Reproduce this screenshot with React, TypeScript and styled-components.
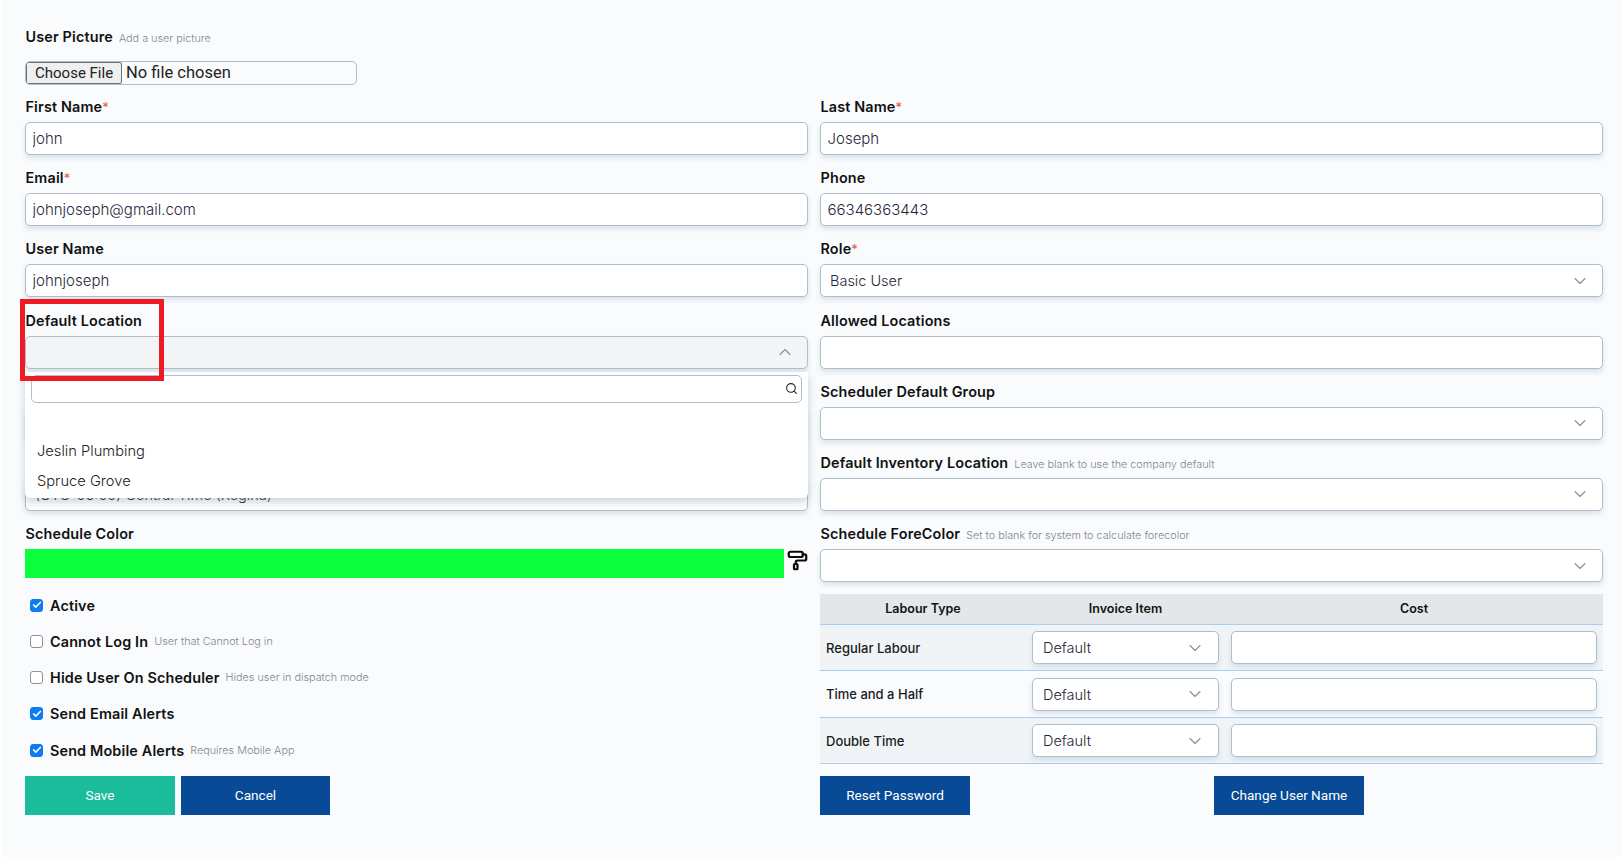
import React from 'react';
import styled, { createGlobalStyle } from 'styled-components';
import { Check, ChevronDown, ChevronUp, PaintRoller, Search } from 'lucide-react';

const GlobalStyle = createGlobalStyle`
  html, body {
    margin: 0;
    background: #ffffff;
  }
  * {
    box-sizing: border-box;
  }
`;

const FONT = `Inter, "Open Sans", "Liberation Sans", sans-serif`;
const BORDER = '#aebecb';

const Page = styled.div`
  position: relative;
  height: 857px;
  margin-left: 1px;
  padding: 26px 19px 0 24px;
  background: #f9fbfd;
  font-family: ${FONT};
  color: #111;
  overflow: hidden;
`;
const Head = styled.div`
  height: 70px;
`;
const Columns = styled.div`
  display: grid;
  grid-template-columns: 783px 783px;
  column-gap: 12px;
`;
const Column = styled.div`
  display: flex;
  flex-direction: column;
`;
const Field = styled.div<{ $height?: number }>`
  position: relative;
  height: ${(p) => p.$height ?? 71.2}px;
`;
const Label = styled.div`
  display: flex;
  align-items: baseline;
  gap: 6px;
  height: 26px;
  padding-left: 0.5px;
  font-size: 14.4px;
  line-height: 21px;
  font-weight: 600;
  letter-spacing: 0.15px;
  white-space: nowrap;
`;
const Required = styled.sup`
  margin-left: -6px;
  font-size: 13px;
  line-height: 0;
  font-weight: 400;
  color: #e2574c;
`;
const Hint = styled.span`
  font-size: 10.8px;
  font-weight: 300;
  letter-spacing: 0;
  color: #7f868e;
`;
const FileInput = styled.input`
  display: block;
  width: 332px;
  height: 24px;
  margin-top: 9px;
  border: 1px solid ${BORDER};
  border-radius: 5px;
  background: #f9fbfd;
  font-family: Roboto, sans-serif;
  font-size: 16.5px;
  line-height: 22px;
  color: #222;
  &::file-selector-button {
    height: 22px;
    margin: 0 4px 0 0;
    padding: 0 8px;
    border: 1px solid #6f6f6f;
    border-radius: 2px;
    background: #efefef;
    font-family: Roboto, sans-serif;
    font-size: 15px;
    color: #222;
  }
`;
const TextInput = styled.input`
  display: block;
  width: 100%;
  height: 33px;
  padding: 0 6.5px;
  border: 1px solid ${BORDER};
  border-radius: 5px;
  background: #fff;
  box-shadow: 0 3px 5px rgba(120, 140, 160, 0.22);
  font-family: ${FONT};
  font-size: 15px;
  font-weight: 300;
  color: #1f2937;
  outline: none;
`;
const SelectBox = styled.div<{ $open?: boolean }>`
  display: flex;
  align-items: center;
  justify-content: space-between;
  height: 33px;
  padding: 0 12px 0 9px;
  border: 1px solid ${BORDER};
  border-radius: 5px;
  background: ${(p) => (p.$open ? '#f2f4f6' : '#fff')};
  box-shadow: 0 3px 5px rgba(120, 140, 160, 0.22);
  font-size: 14.5px;
  font-weight: 300;
  color: #1f2937;
  white-space: nowrap;
  svg {
    flex: none;
    color: #8a93a0;
  }
`;
const Dropdown = styled.div`
  position: absolute;
  top: 62.4px;
  left: 0;
  right: 0;
  z-index: 2;
  height: 126px;
  padding-top: 3px;
  border-radius: 0 0 5px 5px;
  background: #fff;
  box-shadow: 0 4px 9px rgba(90, 110, 130, 0.3);
`;
const SearchBox = styled.div`
  display: flex;
  align-items: center;
  justify-content: flex-end;
  height: 28px;
  margin: 0 6px 3px;
  padding-right: 3px;
  border: 1px solid ${BORDER};
  border-radius: 5px;
  background: #fff;
  color: #222;
`;
const Option = styled.div`
  height: 30px;
  padding: 0 12px;
  font-size: 14.7px;
  line-height: 30px;
  font-weight: 300;
  color: #222;
`;
const ColorRow = styled.div`
  display: flex;
  align-items: flex-start;
  gap: 3px;
`;
const ColorBar = styled.div`
  width: 760px;
  height: 29px;
  background: #0cff3c;
`;
const RollerButton = styled.span`
  display: flex;
  margin-top: 1px;
  color: #0a0a0a;
`;
const CheckRow = styled.label`
  display: flex;
  align-items: center;
  height: 36.25px;
  padding-left: 5px;
  font-size: 14.4px;
  font-weight: 600;
  letter-spacing: 0.15px;
  white-space: nowrap;
`;
const CheckBox = styled.span<{ $checked?: boolean }>`
  display: flex;
  align-items: center;
  justify-content: center;
  width: 13px;
  height: 13px;
  margin-right: 7px;
  border: 1px solid ${(p) => (p.$checked ? '#0d7bf2' : '#8b9298')};
  border-radius: 3px;
  background: ${(p) => (p.$checked ? '#0d7bf2' : '#fff')};
  color: #fff;
`;
const CheckHint = styled(Hint)`
  margin-left: 6px;
`;
const ButtonRow = styled.div<{ $spread?: boolean }>`
  display: flex;
  gap: ${(p) => (p.$spread ? '244px' : '6px')};
  margin-top: ${(p) => (p.$spread ? '12px' : '8px')};
`;
const Button = styled.button<{ $save?: boolean }>`
  width: 150px;
  height: 39px;
  padding: 0 0 1px;
  border: 0;
  background: ${(p) => (p.$save ? '#1abc9c' : '#084a96')};
  font-family: Roboto, sans-serif;
  font-size: 13.6px;
  color: #fff;
`;
const CancelButton = styled(Button)`
  width: 149px;
`;
const Table = styled.table`
  width: 783px;
  border-collapse: collapse;
  table-layout: fixed;
  margin-top: -0.4px;
`;
const HeadCell = styled.th<{ $width?: number }>`
  width: ${(p) => (p.$width ? `${p.$width}px` : 'auto')};
  height: 31px;
  padding: 0 0 2px;
  background: #e4e7ea;
  border-bottom: 1px solid #a9cdf3;
  font-size: 12.5px;
  font-weight: 600;
  text-align: center;
`;
const Row = styled.tr<{ $shaded?: boolean }>`
  background: ${(p) => (p.$shaded ? '#f1f4f6' : 'transparent')};
  border-bottom: 1px solid #a9cdf3;
`;
const Cell = styled.td<{ $tall?: boolean }>`
  height: ${(p) => (p.$tall ? 47 : 46)}px;
  padding: 0 6px;
  font-size: 13px;
  font-weight: 500;
  color: #1c1c1c;
`;
const CellSelect = styled(SelectBox)`
  margin-right: 0.5px;
  padding-left: 10px;
  padding-right: 13px;
`;
const Annotation = styled.div`
  position: absolute;
  top: 299px;
  left: 19px;
  width: 144px;
  height: 82px;
  z-index: 3;
  border: 5px solid #ed1c24;
  pointer-events: none;
`;

const labourRows = [
  { name: 'Regular Labour', shaded: true },
  { name: 'Time and a Half', shaded: false },
  { name: 'Double Time', shaded: true },
];

const checks = [
  { name: 'Active', checked: true },
  { name: 'Cannot Log In', hint: 'User that Cannot Log in' },
  { name: 'Hide User On Scheduler', hint: 'Hides user in dispatch mode' },
  { name: 'Send Email Alerts', checked: true },
  { name: 'Send Mobile Alerts', hint: 'Requires Mobile App', checked: true },
];

const Arrow = () => <ChevronDown size={20} strokeWidth={1.4} />;

export default function App() {
  return (
    <Page>
      <GlobalStyle />
      <Head>
        <Label>
          User Picture <Hint>Add a user picture</Hint>
        </Label>
        <FileInput type="file" />
      </Head>
      <Columns>
        <Column>
          <Field>
            <Label>First Name<Required>*</Required></Label>
            <TextInput defaultValue="john" />
          </Field>
          <Field>
            <Label>Email<Required>*</Required></Label>
            <TextInput defaultValue="johnjoseph@gmail.com" />
          </Field>
          <Field>
            <Label>User Name</Label>
            <TextInput defaultValue="johnjoseph" />
          </Field>
          <Field>
            <Label>Default Location</Label>
            <SelectBox $open>
              <span />
              <ChevronUp size={20} strokeWidth={1.4} />
            </SelectBox>
            <Dropdown>
              <SearchBox>
                <Search size={13} strokeWidth={2} />
              </SearchBox>
              <Option />
              <Option>Jeslin Plumbing</Option>
              <Option>Spruce Grove</Option>
            </Dropdown>
          </Field>
          <Field>
            <Label />
            <SelectBox />
          </Field>
          <Field>
            <Label>Time Zone</Label>
            <SelectBox>(UTC-06:00) Central Time (Regina)</SelectBox>
          </Field>
          <Field $height={63.8}>
            <Label>Schedule Color</Label>
            <ColorRow>
              <ColorBar />
              <RollerButton>
                <PaintRoller size={21} strokeWidth={2.5} />
              </RollerButton>
            </ColorRow>
          </Field>
          {checks.map((c) => (
            <CheckRow key={c.name}>
              <CheckBox $checked={c.checked}>
                {c.checked && <Check size={10} strokeWidth={4} />}
              </CheckBox>
              {c.name}
              {c.hint && <CheckHint>{c.hint}</CheckHint>}
            </CheckRow>
          ))}
          <ButtonRow>
            <Button $save>Save</Button>
            <CancelButton>Cancel</CancelButton>
          </ButtonRow>
        </Column>
        <Column>
          <Field>
            <Label>Last Name<Required>*</Required></Label>
            <TextInput defaultValue="Joseph" />
          </Field>
          <Field>
            <Label>Phone</Label>
            <TextInput defaultValue="66346363443" />
          </Field>
          <Field>
            <Label>Role<Required>*</Required></Label>
            <SelectBox>
              Basic User
              <Arrow />
            </SelectBox>
          </Field>
          <Field>
            <Label>Allowed Locations</Label>
            <TextInput />
          </Field>
          <Field>
            <Label>Scheduler Default Group</Label>
            <SelectBox>
              <span />
              <Arrow />
            </SelectBox>
          </Field>
          <Field>
            <Label>
              Default Inventory Location <Hint>Leave blank to use the company default</Hint>
            </Label>
            <SelectBox>
              <span />
              <Arrow />
            </SelectBox>
          </Field>
          <Field>
            <Label>
              Schedule ForeColor <Hint>Set to blank for system to calculate forecolor</Hint>
            </Label>
            <SelectBox>
              <span />
              <Arrow />
            </SelectBox>
          </Field>
          <Table>
            <thead>
              <tr>
                <HeadCell $width={206}>Labour Type</HeadCell>
                <HeadCell $width={199}>Invoice Item</HeadCell>
                <HeadCell>Cost</HeadCell>
              </tr>
            </thead>
            <tbody>
              {labourRows.map((r, i) => (
                <Row key={r.name} $shaded={r.shaded}>
                  <Cell $tall={i === 1}>{r.name}</Cell>
                  <Cell $tall={i === 1}>
                    <CellSelect>
                      Default
                      <Arrow />
                    </CellSelect>
                  </Cell>
                  <Cell $tall={i === 1}>
                    <TextInput />
                  </Cell>
                </Row>
              ))}
            </tbody>
          </Table>
          <ButtonRow $spread>
            <Button>Reset Password</Button>
            <Button>Change User Name</Button>
          </ButtonRow>
        </Column>
      </Columns>
      <Annotation />
    </Page>
  );
}
